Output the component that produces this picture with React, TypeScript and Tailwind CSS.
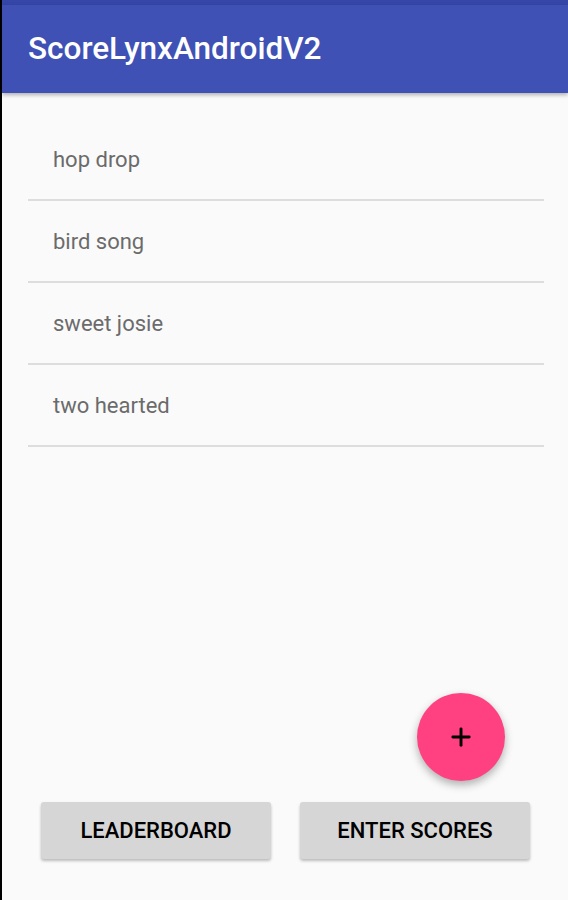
import { Plus } from 'lucide-react';

const items = ['hop drop', 'bird song', 'sweet josie', 'two hearted'];

export default function App() {
  return (
    <div className="flex h-[900px] w-[568px] border-l-2 border-black bg-[#fafafa] font-['Roboto',sans-serif]">
      <div className="relative flex flex-1 flex-col">
        <div className="h-[5px] bg-[#3646a8]" />
        <header className="z-10 flex h-[88px] items-center bg-[#3f51b5] pl-[26px] shadow-[0_2px_4px_rgba(0,0,0,0.3)]">
          <h1 className="text-[31.5px] font-medium text-white">ScoreLynxAndroidV2</h1>
        </header>

        <ul className="mt-[26px] pl-[26px] pr-[24px]">
          {items.map((item) => (
            <li
              key={item}
              className="flex h-[82px] items-center border-b-2 border-[#dddddd] pl-[25px] text-[22px] text-[#6b6b6b]"
            >
              {item}
            </li>
          ))}
        </ul>

        <button className="absolute left-[415px] top-[693px] flex h-[88px] w-[88px] items-center justify-center rounded-full bg-[#ff4081] shadow-[0_4px_8px_rgba(0,0,0,0.3)]">
          <Plus className="h-[28px] w-[28px] text-black" strokeWidth={2.5} />
        </button>

        <div className="mt-auto mb-[41px] flex gap-[29px] pl-[39px]">
          <button className="h-[57px] w-[230px] rounded-[3px] bg-[#d6d6d6] text-[22px] font-medium text-black shadow-[0_2px_3px_rgba(0,0,0,0.25)]">
            LEADERBOARD
          </button>
          <button className="h-[57px] w-[230px] rounded-[3px] bg-[#d6d6d6] text-[22px] font-medium text-black shadow-[0_2px_3px_rgba(0,0,0,0.25)]">
            ENTER SCORES
          </button>
        </div>
      </div>
    </div>
  );
}
